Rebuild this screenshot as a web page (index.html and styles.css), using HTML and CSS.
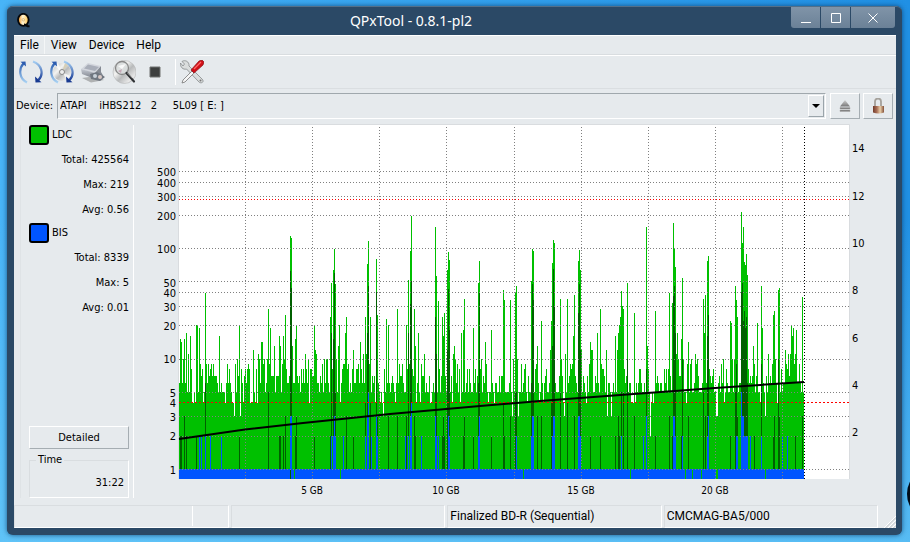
FILE: index.html
```html
<!DOCTYPE html>
<html lang="en">
<head>
<meta charset="utf-8">
<title>QPxTool - 0.8.1-pl2</title>
<link rel="stylesheet" href="styles.css">
</head>
<body>
<div class="desktop-icon" aria-hidden="true"></div>
<div class="window">
  <header class="titlebar">
    <svg class="app-icon" viewBox="0 0 14 15" aria-hidden="true">
      <defs><linearGradient id="q" x1="0" x2="1"><stop offset="0" stop-color="#ef8b10"/><stop offset=".45" stop-color="#fff6d8"/><stop offset="1" stop-color="#ffc247"/></linearGradient></defs>
      <ellipse cx="6.3" cy="6.8" rx="5.3" ry="6" fill="url(#q)" stroke="#05070a" stroke-width="1.8"/>
      <circle cx="6.3" cy="6.8" r="1.3" fill="#f5e6c0" stroke="#c79a50" stroke-width=".5"/>
      <path d="M7 11.5c2 0 2.500 2 5.500 1.800" fill="none" stroke="#05070a" stroke-width="2"/>
    </svg>
    <h1>QPxTool - 0.8.1-pl2</h1>
    <div class="controls">
      <button type="button" aria-label="Minimize"><svg viewBox="0 0 10 10"><path d="M0 9.500h10"/></svg></button>
      <button type="button" aria-label="Maximize"><svg viewBox="0 0 10 10"><path d="M.5.5h9v9h-9z"/></svg></button>
      <button type="button" class="close" aria-label="Close"><svg viewBox="0 0 10 10"><path d="M.5.5l9 9M9.500.5l-9 9"/></svg></button>
    </div>
  </header>
  <nav class="menubar">
    <button type="button" class="active">File</button><button type="button">View</button><button type="button">Device</button><button type="button">Help</button>
  </nav>
  <svg class="defs" width="0" height="0" aria-hidden="true">
    <defs>
      <linearGradient id="up" x1="0" y1="1" x2="0" y2="0"><stop offset="0" stop-color="#a9d2f3"/><stop offset="1" stop-color="#2f62b4"/></linearGradient>
      <linearGradient id="down" x1="0" y1="0" x2="0" y2="1"><stop offset="0" stop-color="#a4cdf2"/><stop offset="1" stop-color="#1c3f98"/></linearGradient>
      <linearGradient id="disc" x1="0" y1="0" x2="1" y2="1"><stop offset="0" stop-color="#b9bcbd"/><stop offset=".35" stop-color="#f3f3f2"/><stop offset=".55" stop-color="#b8babb"/><stop offset=".8" stop-color="#e9e9e9"/><stop offset="1" stop-color="#999"/></linearGradient>
      <linearGradient id="metal" x1="0" y1="0" x2="0" y2="1"><stop offset="0" stop-color="#c5c9d2"/><stop offset="1" stop-color="#777c85"/></linearGradient>
      <linearGradient id="brass" x1="0" x2="1"><stop offset="0" stop-color="#713b2c"/><stop offset=".35" stop-color="#a96f56"/><stop offset=".65" stop-color="#ead0aa"/><stop offset="1" stop-color="#84503a"/></linearGradient>
      <g id="arrows">
        <path d="M8 22.500C0 18.500 -.5 9 4.500 3.500" fill="none" stroke="url(#up)" stroke-width="2.200"/>
        <path d="M1.500 1.800l5-.3.5 5z" fill="#2d5caf"/>
        <path d="M14 1.500c9 3 11 13 5.500 18.500" fill="none" stroke="url(#down)" stroke-width="2.200"/>
        <path d="M22.500 22.200l-6 .3-.5-6z" fill="#183a91"/>
      </g>
    </defs>
  </svg>
  <div class="toolbar">
    <button type="button" aria-label="Rescan bus"><svg viewBox="0 0 24 24"><use href="#arrows"/></svg></button>
    <button type="button" aria-label="Update media info"><svg viewBox="0 0 24 24"><circle cx="12" cy="12" r="9" fill="url(#disc)"/><path d="M12 12L5 6l3-3zM12 12l8 4-3 4z" fill="#fff" opacity=".7"/><path d="M12 12l3-9 3 2z" fill="#d6cfb6"/><circle cx="12" cy="12" r="2.500" fill="#eee" stroke="#888"/><use href="#arrows"/></svg></button>
    <button type="button" aria-label="Device info"><svg viewBox="0 0 24 24"><path d="M1 18l9 4.500 13-2.500-8-4z" fill="#777" opacity=".5"/><path d="M0 9L7 3l13 3-6 8z" fill="#d3d6dd"/><path d="M3 8.500l4-4 11 2.500-4 4z" fill="#a9aeb9"/><path d="M0 9l14 4v6L1 14z" fill="url(#metal)"/><path d="M14 13l6-7v6l3 5-9 2z" fill="#858a93"/><path d="M9 14l7-2 8 5-5 4-9-2z" fill="#6f7680"/><circle cx="14" cy="16" r="2" fill="#c8d0d8"/><circle cx="19" cy="17" r="2" fill="#d7c8c4"/></svg></button>
    <button type="button" aria-label="Scan"><svg viewBox="0 0 24 24"><circle cx="12.500" cy="12" r="11.500" fill="url(#disc)" stroke="#b5b7b8" stroke-width=".6"/><circle cx="10" cy="8" r="6.500" fill="#d9dddd" fill-opacity=".8" stroke="#888" stroke-width="1.300"/><path d="M6 6l4 3 4-5z" fill="#fff" opacity=".8"/><path d="M10 9l-4 2 3 2z" fill="#c5a8b6"/><path d="M14.500 13l7.500 8.500" stroke="#303235" stroke-width="2.200" stroke-linecap="round"/><path d="M15 13l5 5" stroke="#888" stroke-width=".7"/></svg></button>
    <button type="button" aria-label="Stop"><svg viewBox="0 0 24 24"><path d="M7 7h10v10H7z" fill="#3d3f3e" stroke="#707371" stroke-width="1"/></svg></button>
    <span class="separator"></span>
    <button type="button" aria-label="Preferences"><svg viewBox="0 0 24 24"><path d="M4.500 4L2 1.500C5-.5 9.500 1.500 9 6l13 13c3 3-1 5-3 3L6.500 9C3 10 0 7 .5 3L3 6z" fill="#dadddd" stroke="#85898a" stroke-width=".8"/><path d="M12 11L3 20l-1 3 3-1 9-9z" fill="#f5f5f5" stroke="#777" stroke-width=".8"/><path d="M11 10l8-9 3-1 2 2-1 3-9 8z" fill="#d01018" stroke="#8b1014" stroke-width=".7"/><path d="M14 9l7-7" stroke="#ff6868" stroke-width="1.300"/><circle cx="20.500" cy="20.500" r="1" fill="#777"/></svg></button>
  </div>
  <div class="device-row">
    <label for="device">Device:</label>
    <div class="combo">
      <select id="device"><option>ATAPI&nbsp;&nbsp;&nbsp; iHBS212&nbsp;&nbsp; 2&nbsp;&nbsp;&nbsp;&nbsp; 5L09 [ E: ]</option></select>
      <span class="combo-arrow"></span>
    </div>
    <button type="button" class="tool-button" aria-label="Eject"><svg viewBox="0 0 16 16"><defs><linearGradient id="ej" x1="0" y1="0" x2="0" y2="1"><stop offset="0" stop-color="#d0d0d0"/><stop offset="1" stop-color="#777"/></linearGradient></defs><path d="M8 2l5 6.500H3z" fill="url(#ej)"/><path d="M3 9.500h10v1.500H3zM3 12h10v1.500H3z" fill="#777" stroke="#aaa" stroke-width=".5"/></svg></button>
    <button type="button" class="tool-button" aria-label="Lock"><svg viewBox="0 0 16 16"><path d="M5 9V3.500C5-.5 11-.5 11 3.500V9" fill="none" stroke="#a5a19b" stroke-width="1.800"/><path d="M3 8h11v6.500q-5.500 2-11 0z" fill="url(#brass)"/></svg></button>
  </div>
  <main>
    <aside>
      <section class="series">
        <h2><span class="swatch ldc"></span>LDC</h2>
        <p>Total: 425564</p><p>Max: 219</p><p>Avg: 0.56</p>
      </section>
      <section class="series">
        <h2><span class="swatch bis"></span>BIS</h2>
        <p>Total: 8339</p><p>Max: 5</p><p>Avg: 0.01</p>
      </section>
      <button type="button" class="detailed">Detailed</button>
      <fieldset><legend>Time</legend><output>31:22</output></fieldset>
    </aside>
    <svg class="chart" viewBox="0 0 762 380" role="img" aria-label="LDC and BIS error counts over disc position">
      <path d="M44.500 359V4.500H715.500V359" fill="none" stroke="#d9dcdf"/>
      <path d="M45 5h670v354H45z" fill="#fff"/>
      <g transform="translate(45 5)">
        <g id="bars" shape-rendering="crispEdges"></g>
        <g id="grid" shape-rendering="crispEdges"></g>
        <polyline class="speed" points="0,314 66,304.500 124,298 211,289 301,281 361,276 421,271.500 536,263 625,257"/>
      </g>
      <g class="left-axis">
        <text x="42" y="56">500</text><text x="42" y="67">400</text><text x="42" y="81">300</text><text x="42" y="100">200</text><text x="42" y="133">100</text><text x="42" y="167">50</text><text x="42" y="177">40</text><text x="42" y="191">30</text><text x="42" y="210">20</text><text x="42" y="243">10</text><text x="42" y="277">5</text><text x="42" y="287">4</text><text x="42" y="301">3</text><text x="42" y="320">2</text><text x="42" y="354">1</text>
      </g>
      <g class="right-axis">
        <text x="718" y="32">14</text><text x="718" y="80">12</text><text x="718" y="127">10</text><text x="718" y="174">8</text><text x="718" y="222">6</text><text x="718" y="269">4</text><text x="718" y="316">2</text>
      </g>
      <g class="bottom-axis">
        <text x="178" y="374">5 GB</text><text x="312" y="374">10 GB</text><text x="447" y="374">15 GB</text><text x="581" y="374">20 GB</text>
      </g>
    </svg>
  </main>
  <footer>
    <div class="cell progress"><span></span></div>
    <div class="cell wide"></div>
    <div class="cell wide">Finalized BD-R (Sequential)</div>
    <div class="cell wide">CMCMAG-BA5/000</div>
    <svg class="grip" viewBox="0 0 12 12" aria-hidden="true"><path d="M0 12L12 0M4 12l8-8M8 12l4-4" stroke="#fff"/><path d="M1.500 12L12 1.500M5.500 12L12 5.500M9.500 12L12 9.500" stroke="#c3c8cb"/></svg>
  </footer>
</div>
<script src="chart.js"></script>
</body>
</html>
```
FILE: styles.css
```css
* { box-sizing: border-box; }
body {
  margin: 0;
  min-height: 100vh;
  display: flex;
  overflow: hidden;
  position: relative;
  padding: 6px 8px 7px 7px;
  font: 11px/14px "DejaVu Sans Condensed", "Noto Sans", sans-serif;
  color: #000;
  background: linear-gradient(to bottom, transparent 40%, #65c7f8cc 100%), linear-gradient(to right, #48b4f8, #2090e4);
}
button, select { font: inherit; color: inherit; margin: 0; border: 0; padding: 0; background: none; }
h1, h2, p { margin: 0; font-weight: normal; font-size: inherit; }
.desktop-icon {
  position: absolute;
  right: -14px;
  top: 478px;
  width: 17px;
  height: 32px;
  border-radius: 50%;
  background: #020c18;
}
.window {
  flex: 1;
  min-width: 0;
  display: flex;
  flex-direction: column;
  background: #e6eaed;
  border: solid #2b4966;
  border-width: 0 6px 7px 7px;
  border-radius: 6px;
  box-shadow: 0 0 5px #0b3a66cc;
}
.titlebar {
  height: 29px;
  margin: 0 -6px 0 -7px;
  padding: 0 7px 0 10px;
  display: grid;
  grid-template-columns: 14px 1fr 104px;
  background: #2b4966;
  border-top: 1px solid #536f89;
  border-radius: 6px 6px 0 0;
}
.app-icon { width: 14px; height: 15px; margin: 6px 0 0; }
.titlebar h1 {
  text-align: center;
  font: 14px/28px "Noto Sans", sans-serif;
  color: #fff;
}
.controls { display: flex; height: 21px; gap: 1px; }
.controls button {
  width: 29px;
  background: linear-gradient(#8094a8, #6b8197);
}
.controls button:first-child { border-radius: 0 0 0 3px; }
.controls .close { width: 44px; border-radius: 0 0 3px 0; }
.controls svg { display: block; width: 10px; height: 10px; margin: 0 auto; fill: none; stroke: #fff; }
.menubar {
  display: flex;
  height: 20px;
  border-top: 1px solid #fff;
  border-bottom: 1px solid #d9dde0;
  font: 12px/18px Roboto, "Noto Sans", sans-serif;
}
.menubar button { padding: 0 6px; }
.menubar .active { box-shadow: inset -1px 0 #f4f6f7; }
.defs { position: absolute; }
.toolbar {
  height: 34px;
  border-top: 1px solid #fff;
  border-bottom: 1px solid #dadee1;
  display: flex;
  align-items: center;
  gap: 7px;
  padding-left: 5px;
}
.toolbar button, .toolbar svg { display: block; width: 24px; height: 24px; }
.separator { width: 1px; height: 26px; background: #fff; }
.toolbar .separator { margin: 0 -3px 0 1px; }
.device-row {
  display: flex;
  align-items: center;
  gap: 4px;
  padding: 4px 3px 1px 2px;
}
.device-row label { width: 37px; white-space: nowrap; }
.combo { flex: 1; position: relative; }
.combo select {
  appearance: none;
  display: block;
  width: 100%;
  height: 26px;
  padding-left: 2px;
  background: #e6eaed;
  border: 1px solid #a0a8ad;
  border-right-color: #fff;
  border-bottom-color: #fff;
  border-radius: 0;
}
.combo-arrow {
  position: absolute;
  top: 2px;
  right: 2px;
  width: 16px;
  height: 22px;
  display: grid;
  place-items: center;
  pointer-events: none;
  border: 1px solid #fff;
  border-right-color: #9aa4aa;
  border-bottom-color: #9aa4aa;
}
.combo-arrow::after { content: ""; border: 4px solid transparent; border-top-color: #000; border-bottom: 0; }
.tool-button, .detailed {
  border: 1px solid #fff;
  border-right-color: #a5adb2;
  border-bottom-color: #a5adb2;
}
.tool-button { width: 30px; height: 26px; }
.tool-button + .tool-button { margin-left: -1px; }
.tool-button svg { display: block; width: 16px; height: 16px; margin: 0 auto; }
main { flex: 1; display: flex; align-items: flex-start; }
aside {
  width: 114px;
  height: 373px;
  flex: none;
  margin: 5px 0 0 6px;
  padding: 0 4px 0 3px;
  display: flex;
  flex-direction: column;
  border-left: 1px solid #dfe3e6;
  border-right: 1px solid #fff;
}
.series { height: 98px; padding-left: 5px; }
.series h2 { display: flex; align-items: center; gap: 3px; height: 20px; }
.swatch { width: 20px; height: 20px; border: 2px solid #000; border-radius: 3px; }
.ldc { background: #00c000; }
.bis { background: #0055ff; }
.series p { text-align: right; line-height: 25px; }
.series h2 + p { margin-top: 2px; }
.detailed { height: 23px; margin: auto 0 0 5px; }
fieldset {
  margin: 4px 0 0 5px;
  padding: 9px 4px 7px;
  border: 1px solid #fff;
  border-top-color: #d9dde0;
  border-left-color: #d9dde0;
}
legend { padding: 0 2px; margin-left: 2px; }
output { display: block; text-align: right; }
.chart { flex: 1; min-width: 0; display: block; }
.chart text { font-size: 11px; }
.chart .bottom-axis text { font-size: 10px; text-anchor: middle; }
.left-axis text { text-anchor: end; }
.speed { fill: none; stroke: #000; stroke-width: 2; }
.bar-ldc { fill: #00c000; }
.bar-dark { fill: #006000; }
.bar-bis { fill: #0055ff; }
.gridline { stroke: #808080; stroke-dasharray: 1 2; }
.limit { fill: #ff0000; }
.end { stroke: #000; stroke-dasharray: 1 2; }
footer {
  display: flex;
  height: 23px;
  font: 12px/21px Roboto, "Noto Sans", sans-serif;
}
.cell {
  border: 1px solid #fff;
  border-top-color: #d9dde0;
  border-left-color: #d9dde0;
  padding-left: 2px;
  margin-right: 2px;
  white-space: nowrap;
}
.progress { width: 215px; padding: 0; }
.progress span { display: block; width: 178px; height: 20px; border-right: 1px solid #fff; }
.wide { flex: 1; }
.grip { width: 12px; height: 12px; align-self: flex-end; margin-left: 4px; }
```
FILE: chart.js
```javascript
const ldc = [
  6,15,14,6,10,15,6,17,5,11,5,16,8,4,4,5,4,20,20,5,19,9,7,8,4,5,39,9,6,9,7,8,9,7,9,7,7,7,6,5,16,5,6,5,5,5,4,6,9,6,8,6,5,4,4,3,9,5,10,7,20,3,8,6,4,7,8,6,8,9,8,4,4,4,12,5,4,8,4,11,10,6,14,14,9,10,5,6,10,28,9,19,7,7,7,13,5,7,7,7,16,13,5,9,16,10,25,8,6,6,7,128,125,13,6,6,15,20,7,6,7,5,8,6,8,6,11,8,6,10,4,8,8,7,7,20,12,11,6,6,5,7,6,9,5,10,6,10,10,6,5,24,48,8,63,98,47,10,5,13,20,4,6,8,9,9,17,24,8,9,5,6,5,8,12,6,6,8,8,9,6,14,8,6,11,6,24,11,72,117,9,24,5,7,6,7,4,80,25,6,5,4,5,4,3,8,5,23,6,20,
  6,5,6,7,6,5,4,6,28,6,9,7,7,9,6,5,5,20,8,52,9,95,195,8,7,28,13,4,6,17,5,4,9,7,7,11,5,6,5,5,7,4,4,5,6,5,155,56,5,33,8,5,7,24,16,26,7,5,63,92,78,5,7,4,11,13,10,6,9,5,8,4,17,5,18,35,5,6,8,5,8,6,5,5,19,6,8,5,7,48,77,8,10,5,7,6,14,9,5,4,5,5,18,6,5,4,6,6,5,5,7,5,7,7,42,34,5,5,5,5,6,34,5,3,10,5,39,45,10,3,5,5,9,5,6,8,9,5,4,7,5,5,50,98,95,5,8,9,13,6,4,5,22,6,4,6,7,8,5,5,6,12,22,73,118,112,6,5,5,5,7,35,10,7,4,3,11,5,35,6,7,9,8,9,16,38,7,6,5,77,97,63,12,5,7,6,5,4,7,5,9,14,12,12,5,5,7,6,17,6,
  5,28,9,8,8,7,5,12,3,6,6,5,3,5,6,5,16,5,12,17,20,24,41,30,28,8,6,7,48,5,6,6,4,4,4,26,4,6,5,6,8,8,6,5,5,6,5,155,13,8,5,2,4,5,4,5,27,6,7,6,5,6,6,5,5,8,6,8,5,8,39,7,5,32,168,98,68,11,17,10,7,7,15,54,10,5,5,4,9,14,5,9,10,5,5,6,11,9,10,7,5,5,5,6,35,17,38,6,77,85,8,7,6,7,8,5,5,3,3,6,7,5,9,6,10,4,5,8,6,5,5,22,21,10,5,10,45,34,24,5,6,6,213,112,155,75,70,88,57,8,6,7,6,7,13,9,5,7,21,5,5,4,45,19,6,5,3,7,5,11,6,7,6,9,25,27,10,6,4,42,44,5,8,5,6,6,12,9,8,11,7,11,20,16,19,9,11,18,6,6,9,6,5,36,5
];

// Pairs of column and value for columns where both series overlap.
const overlap = [
  [1,2],[2,2],[5,3],[7,2],[17,2],[26,6],[60,2],[89,5],[100,2],[101,2],[104,2],[106,3],[111,62],[112,44],[116,2],[117,3],[135,2],[151,2],[152,17],[154,15],[155,60],[156,5],[167,3],[174,2],[186,4],[188,17],[189,45],[191,4],[197,40],[198,3],[209,3],
  [218,3],[227,3],[229,17],[231,31],[232,50],[235,3],[236,2],[256,24],[257,11],[263,2],[264,3],[265,2],[268,12],[269,43],[270,18],[284,2],[285,3],[294,2],[299,6],[300,39],[312,2],[324,4],[325,2],[331,3],[336,5],[337,5],[352,6],[353,47],[354,34],[358,3],[362,3],[372,4],[373,13],[374,65],[375,30],[381,5],[388,4],[395,3],[399,26],[400,47],[401,12],[411,2],
  [421,2],[436,2],[439,3],[440,2],[442,5],[444,5],[448,10],[455,3],[467,8],[476,2],[490,3],[493,2],[494,37],[495,45],[496,17],[502,2],[503,10],[509,3],[524,5],[526,3],[528,16],[529,25],[551,2],[556,5],[557,9],[558,3],[562,40],[563,48],[564,22],[565,27],[566,19],[567,24],[568,6],[575,2],[582,9],[594,2],[595,3],[599,10],[600,3],[616,2],[623,3]
];
const bis = [
  [20,2],[22,2],[26,2],[31,2],[42,2],[111,3],[112,3],[152,2],[154,2],[155,3],[156,2],[164,2],[186,2],[188,3],[189,5],[192,2],[197,3],[198,2],
  [226,2],[229,2],[231,3],[232,4],[242,2],[256,3],[257,2],[259,2],[269,3],[270,2],[299,2],[300,3],[337,2],[352,2],[353,3],[354,3],[373,2],[374,3],[375,3],[399,3],[400,3],[401,2],
  [442,2],[464,2],[467,3],[494,3],[495,3],[496,2],[503,2],[528,2],[529,3],[557,2],[558,2],[562,5],[563,3],[564,3],[565,2],[566,2],[567,2],[568,2],[571,2],[582,2],[603,2],[608,2]
];
const gaps = [115, 161, 344, 451, 506, 513, 522, 537, 538, 586];

const bottom = 354;
const one = 344;
const y = value => Math.round(one - 110.4 * Math.log10(value));
const column = (x, top, base) => `M${x} ${top}h1V${base}h-1z`;
const add = (parent, tag, attributes) => {
  const node = document.createElementNS("http://www.w3.org/2000/svg", tag);
  for (const name in attributes) node.setAttribute(name, attributes[name]);
  document.getElementById(parent).append(node);
};

add("bars", "path", { class: "bar-ldc", d: ldc.map((v, x) => column(x, y(v), bottom)).join("") });
add("bars", "path", { class: "bar-dark", d: overlap.map(([x, v]) => column(x, y(v), one)).join("") });
add("bars", "path", { class: "bar-bis", d: bis.map(([x, v]) => column(x, y(v), one)).join("") + `M0 ${one}h${ldc.length}V${bottom}H0z` });
add("bars", "path", { class: "bar-ldc", d: gaps.map(x => column(x, one, bottom)).join("") });
add("bars", "path", { class: "bar-dark", d: column(111, one, bottom) });

for (const v of [1, 2, 3, 5, 10, 20, 30, 40, 50, 100, 200, 300, 400, 500]) {
  add("grid", "path", { class: "gridline", d: `M0 ${y(v) + 0.5}H670` });
}
for (const x of [66, 133, 200, 267, 335, 402, 469, 536, 603]) {
  add("grid", "path", { class: "gridline", d: `M${x + 0.5} 2V${bottom}` });
}
const dots = (top, step, width) => {
  let d = "";
  for (let x = 0; x < 670; x += step) d += `M${x} ${top}h${width}v1h-${width}z`;
  return d;
};
add("grid", "path", { class: "limit", d: dots(277, 4, 2) });
add("grid", "path", { class: "limit", d: dots(74, 3, 1) });
add("grid", "path", { class: "end", d: `M625.5 2V${bottom}` });
```
